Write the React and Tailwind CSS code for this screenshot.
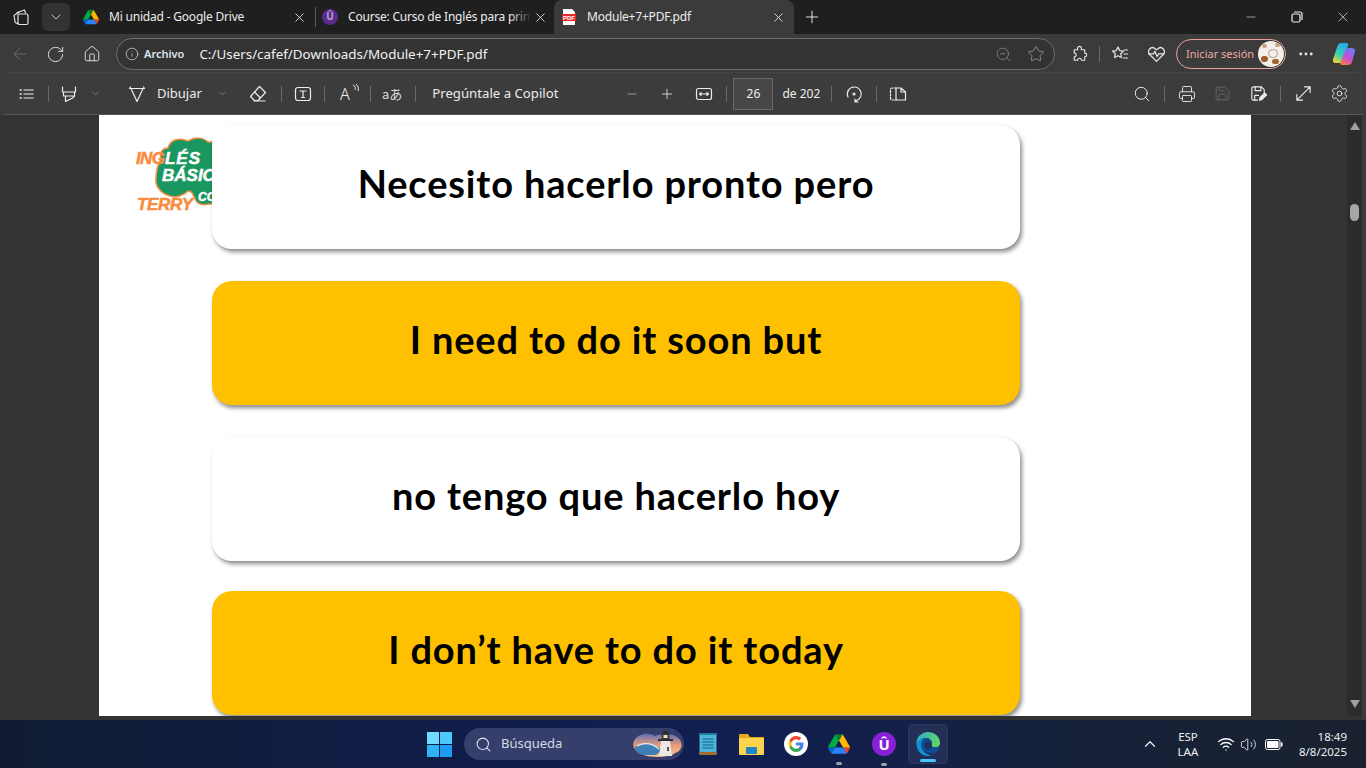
import React from 'react';
import { ArrowLeft, ChevronDown, ChevronUp, Ellipsis, Home, Info, Minus, Plus, Printer, RotateCw, Save, Search, Settings, Star, Volume2, Wifi, X, ZoomOut } from 'lucide-react';

const ui = { fontFamily: '"Noto Sans", "Open Sans", sans-serif' };

const Sep = ({ className = '' }) => <div className={`w-px h-[16px] bg-[#6a6a6a] shrink-0 ${className}`} />;

const Svg = ({ size = 20, children, className = '', vb = '0 0 20 20' }) => (
  <svg width={size} height={size} viewBox={vb} fill="none" stroke="currentColor" strokeWidth="1.2" strokeLinecap="round" strokeLinejoin="round" className={`shrink-0 ${className}`}>
    {children}
  </svg>
);

const DriveIcon = ({ size = 16 }) => (
  <svg width={size} height={size} viewBox="0 0 87.3 78" className="shrink-0">
    <path d="m6.6 66.85 3.85 6.65c.8 1.4 1.95 2.5 3.3 3.3l13.75-23.8h-27.5c0 1.55.4 3.1 1.2 4.5z" fill="#0066da" />
    <path d="m43.65 25-13.75-23.8c-1.35.8-2.5 1.9-3.3 3.3l-25.4 44a9.06 9.06 0 0 0 -1.2 4.5h27.5z" fill="#00ac47" />
    <path d="m73.55 76.8c1.35-.8 2.5-1.9 3.3-3.3l1.6-2.75 7.65-13.25c.8-1.4 1.2-2.95 1.2-4.5h-27.502l5.852 11.5z" fill="#ea4335" />
    <path d="m43.65 25 13.75-23.8c-1.35-.8-2.9-1.2-4.5-1.2h-18.5c-1.6 0-3.15.45-4.5 1.2z" fill="#00832d" />
    <path d="m59.8 53h-32.3l-13.75 23.8c1.35.8 2.9 1.2 4.5 1.2h50.8c1.6 0 3.15-.45 4.5-1.2z" fill="#2684fc" />
    <path d="m73.4 26.5-12.7-22c-.8-1.4-1.95-2.5-3.3-3.3l-13.75 23.8 16.15 28h27.45c0-1.55-.4-3.1-1.2-4.5z" fill="#ffba00" />
  </svg>
);

const UIcon = ({ size = 16, bg = '#5b2a8c', fg = '#b9a6cc' }) => (
  <div className="rounded-full flex items-center justify-center shrink-0 font-bold" style={{ width: size, height: size, background: bg, color: fg, fontSize: size * 0.62, lineHeight: 1 }}>
    Û
  </div>
);

const Tab = ({ icon, title, active, width, fade, iconBox, closeBox }) => (
  <div className={`relative flex items-center h-full shrink-0 ${width} ${active ? 'bg-[#3b3b3b] rounded-t-[8px]' : ''}`}>
    <div className={`flex items-center ${iconBox}`}>{icon}</div>
    <span className="text-[12px] tracking-[-0.2px] text-[#ececec] overflow-hidden whitespace-nowrap flex-1 min-w-0">{title}</span>
    {fade && <div className="absolute right-[22px] top-0 h-full w-[22px] bg-gradient-to-r from-transparent to-[#1f1f1f]" />}
    <X size={15} strokeWidth={1.4} className={`text-[#e8e8e8] ml-[4px] shrink-0 ${closeBox}`} />
  </div>
);

const TabBar = () => (
  <div className="h-[34px] bg-[#1f1f1f] flex items-end text-white shrink-0">
    <div className="w-[42px] h-full flex items-center justify-center">
      <Svg size={20} className="text-[#e4e4e4]">
        <path d="M6 5.500l7.500-2.500 1 3M3.500 8l5-3M3 8.500l1.200 7 3 1.500" />
        <rect x="7" y="7" width="10" height="10.500" rx="1.500" />
      </Svg>
    </div>
    <div className="w-[28px] h-[28px] mb-[3px] rounded-[6px] bg-[#333333] flex items-center justify-center">
      <ChevronDown size={16} strokeWidth={1.300} className="text-[#dddddd]" />
    </div>
    <div className="w-[2px]" />
    <div className="flex h-[34px] items-center">
      <Tab width="w-[243px]" iconBox="w-[37px] pl-[11px]" closeBox="mr-[8px]" title="Mi unidad - Google Drive" icon={<DriveIcon />} />
      <div className="w-px h-[20px] bg-[#5a5a5a]" />
      <Tab width="w-[238px]" iconBox="w-[32px] pl-[6px]" closeBox="mr-[6px]" fade title="Course: Curso de Inglés para principiantes" icon={<UIcon />} />
      <Tab
        width="w-[240px]"
        active
        iconBox="w-[33px] pl-[7px]"
        closeBox="mr-[8px]"
        title="Module+7+PDF.pdf"
        icon={
          <svg width="16" height="16" viewBox="0 0 16 16">
            <path d="M2 0h9l3 3v13H2z" fill="#fff" />
            <rect x="1" y="5" width="14" height="7" fill="#e5252a" />
            <text x="8" y="10.800" textAnchor="middle" fontSize="6" fontWeight="700" fill="#fff" fontFamily="Liberation Sans">PDF</text>
          </svg>
        }
      />
    </div>
    <div className="w-[36px] h-full flex items-center justify-center">
      <Plus size={20} strokeWidth={1.100} className="text-[#f2f2f2]" />
    </div>
    <div className="flex-1" />
    <div className="flex items-center h-full text-[#eeeeee]">
      <div className="w-[46px] flex justify-center"><Minus size={14} strokeWidth={1} /></div>
      <div className="w-[46px] flex justify-center">
        <Svg size={12} vb="0 0 12 12"><rect x="1" y="3" width="8" height="8" rx="1.500" /><path d="M3.500 1h5.500a2 2 0 0 1 2 2v5.500" /></Svg>
      </div>
      <div className="w-[46px] flex justify-center"><X size={16} strokeWidth={1} /></div>
    </div>
  </div>
);

const AddressBar = () => (
  <div className="h-[38px] pt-[2px] bg-[#3b3b3b] flex items-center text-[#e6e6e6] shrink-0">
    <div className="w-[40px] flex justify-center"><ArrowLeft size={20} strokeWidth={1} className="text-[#707070]" /></div>
    <div className="w-[31px] flex justify-center"><RotateCw size={19} strokeWidth={1.200} /></div>
    <div className="w-[42px] flex justify-center"><Home size={18} strokeWidth={1.200} /></div>
    <div className="ml-[3px] w-[939px] h-[32px] rounded-full border border-[#6c6c6c] bg-[#333333] flex items-center">
      <Info size={14} strokeWidth={1.200} className="ml-[8px] text-[#d8d8d8]" />
      <span className="ml-[5px] text-[11px] font-semibold text-[#dfe6ee]">Archivo</span>
      <span className="ml-[15px] text-[13.400px] text-[#f0f0f0]">C:/Users/cafef/Downloads/Module+7+PDF.pdf</span>
      <div className="flex-1" />
      <ZoomOut size={17} strokeWidth={1.100} className="text-[#8d8d8d]" />
      <Star size={18} strokeWidth={1.100} className="ml-[15px] mr-[9px] text-[#9a9a9a]" />
    </div>
    <Svg size={19} className="ml-[15px]">
      <path d="M8 3.500a2 2 0 0 1 4 0V5h3.500v3.500a2 2 0 0 1 0 4V16H12a2 2 0 0 0-4 0H4.500v-3.500a2 2 0 0 0 0-4V5H8z" />
    </Svg>
    <Sep className="ml-[10px] h-[16px]" />
    <Svg size={20} className="ml-[10px]">
      <path d="M8 3l1.700 3.600 3.800.5-2.800 2.600.7 3.800L8 11.700l-3.400 1.800.7-3.800L2.500 7.100l3.800-.5z" />
      <path d="M14 6h3.500M14 10h3.500M13 14h4.500" />
    </Svg>
    <Svg size={21} className="ml-[16px]">
      <path d="M10 16.500L3.500 10c-3-4 1.500-8 4.500-6l2 1.500L12 4c3-2 7.500 2 4.500 6z" />
      <path d="M2.500 9.500h4.500l1.500-2.500 2 5 1.500-2.500h5" />
    </Svg>
    <div className="ml-[9px] w-[110px] h-[30px] rounded-full border border-[#e8a29c] flex items-center shrink-0">
      <span className="ml-[9px] text-[11px] text-[#eeaaa4] whitespace-nowrap">Iniciar sesión</span>
      <div className="ml-auto mr-[1px] w-[26px] h-[26px] rounded-full bg-[#f3efe9] relative overflow-hidden">
        <div className="absolute left-[3px] top-[15px] w-[7px] h-[6px] rounded-full bg-[#9c5a2c]" />
        <div className="absolute left-[14px] top-[18px] w-[7px] h-[5px] rounded-full bg-[#a8642f]" />
        <div className="absolute left-[10px] top-[8px] w-[10px] h-[9px] rounded-full border border-[#b09a88]" />
        <div className="absolute left-[4px] top-[3px] w-[5px] h-[4px] rounded-full bg-[#c9a280]" />
        <div className="absolute left-[17px] top-[2px] w-[5px] h-[4px] rounded-full bg-[#c9a280]" />
      </div>
    </div>
    <Ellipsis size={18} strokeWidth={1.800} className="ml-[11px]" />
    <svg width="24" height="24" viewBox="0 0 24 24" className="ml-[17px] shrink-0">
      <defs>
        <linearGradient id="cpa" x1="0.700" y1="0" x2="0.200" y2="1"><stop offset="0" stopColor="#2aa8f0" /><stop offset="0.550" stopColor="#35d0b0" /><stop offset="1" stopColor="#f7d02b" /></linearGradient>
        <linearGradient id="cpb" x1="0.700" y1="0" x2="0.200" y2="1"><stop offset="0" stopColor="#6a7cf0" /><stop offset="0.550" stopColor="#c84fd8" /><stop offset="1" stopColor="#f5803c" /></linearGradient>
      </defs>
      <path d="M9.500 1h5c1.500 0 2 1 1.500 2.500L11 19c-.5 1.500-1.500 2-3 2H3.500C1.500 21 .5 19.500 1 17.500L5.500 4C6 2 7.500 1 9.500 1z" fill="url(#cpa)" />
      <path d="M17 6h3c2 0 3.500 1.500 3 3.500L20 20c-.5 2-2 3-4 3h-6c-1.500 0-2-1-1.500-2.500L13 9c.5-2 2-3 4-3z" fill="url(#cpb)" />
    </svg>
  </div>
);

const PdfToolbar = () => (
  <div className="h-[43px] bg-[#3b3b3b] shrink-0 pl-[3px] pr-[3px]">
    <div className="h-full rounded-t-[7px] bg-[#3c3c3c] border-t border-[#454545] border-b-[#565656] border-b flex items-center text-[#ececec] text-[13px] relative">
      <Svg size={18} className="ml-[15px]">
        <path d="M6.500 5.500H17M6.500 10H17M6.500 14.500H17" />
        <path d="M2.500 5.500h1M2.500 10h1M2.500 14.500h1" strokeWidth="1.800" />
      </Svg>
      <Sep className="ml-[12px]" />
      <Svg size={20} className="ml-[10px]">
        <path d="M3.500 3v5h13V3M4.500 8v4h11V8M4.500 12h11l-2 2-7 3.500V12" />
      </Svg>
      <ChevronDown size={11} strokeWidth={1.100} className="ml-[11px] text-[#b0b0b0]" />
      <Svg size={20} className="ml-[26px]">
        <path d="M2.500 4.500h15M4 4.500l6 13 6-13M2.500 4.500l1-1.500M17.500 4.500l-1-1.500" />
      </Svg>
      <span className="ml-[10px] text-[13px]">Dibujar</span>
      <ChevronDown size={11} strokeWidth={1.100} className="ml-[15px] text-[#b0b0b0]" />
      <Svg size={20} className="ml-[20px]">
        <path d="M11.500 2.500l6 6-7.500 8H6.500L2.500 12.500z" />
        <path d="M6.500 8l6 6M6 17h11" />
      </Svg>
      <Sep className="ml-[13px]" />
      <Svg size={20} className="ml-[11px]">
        <rect x="2.500" y="3.500" width="15" height="13" rx="2.500" />
        <path d="M7 7h6M10 7v6.500M8.500 13.500h3" />
      </Svg>
      <Sep className="ml-[11px]" />
      <div className="ml-[15px] w-[20px] relative h-[22px] text-[16px] leading-[22px] font-light">
        A
        <svg width="8" height="10" viewBox="0 0 8 10" fill="none" stroke="currentColor" strokeWidth="1" className="absolute right-0 top-[1px]">
          <path d="M1 1c2 1 3 3 2 5M4 0c2 2 3 4 2 7" />
        </svg>
      </div>
      <Sep className="ml-[10px]" />
      <span className="ml-[11px] text-[13px] text-[#dddddd]" style={{ fontFamily: '"Noto Sans CJK JP", sans-serif' }}>aあ</span>
      <Sep className="ml-[13px]" />
      <span className="ml-[16px] text-[13.200px]">Pregúntale a Copilot</span>
      <Minus size={14} strokeWidth={1.200} className="ml-[67px] text-[#b5b5b5]" />
      <Plus size={16} strokeWidth={1.200} className="ml-[20px]" />
      <Svg size={20} className="ml-[19px]">
        <rect x="2.500" y="4.500" width="15" height="11" rx="2" />
        <path d="M5.500 10h9M5.500 10l1.500-1.300v2.600zM14.500 10L13 8.700v2.600z" />
      </Svg>
      <Sep className="ml-[12px]" />
      <div className="ml-[6px] w-[40px] h-[32px] border border-[#6a6a6a] bg-[#474747] flex items-center justify-center text-[12px]">26</div>
      <span className="ml-[9px] text-[12px]">de 202</span>
      <Sep className="ml-[11px]" />
      <Svg size={20} className="ml-[12px]">
        <path d="M4 13A7 7 0 0 1 10 3a7 7 0 0 1 5 12l-3 2M11 15v3h3" />
        <circle cx="10" cy="10" r="1" />
      </Svg>
      <Sep className="ml-[12px]" />
      <Svg size={20} className="ml-[11px]">
        <path d="M8 4H4a1.500 1.500 0 0 0-1.500 1.500v9A1.500 1.500 0 0 0 4 16h4" strokeDasharray="2 1.500" />
        <path d="M8 4h5l4.500 4v8H8zM13 4v4h4.500" />
      </Svg>
      <div className="flex-1" />
      <Search size={18} strokeWidth={1.300} />
      <Sep className="ml-[13px]" />
      <Printer size={18} strokeWidth={1.200} className="ml-[13px]" />
      <Save size={17} strokeWidth={1.100} className="ml-[18px] text-[#6e6e6e]" />
      <Svg size={19} className="ml-[18px]">
        <path d="M9 17H4.500A1.500 1.500 0 0 1 3 15.500v-11A1.500 1.500 0 0 1 4.500 3H13l3 3v3" />
        <path d="M6.500 3v4h6V3M6 17v-5h4" />
        <path d="M11 17l.5-2.500 5-5 2 2-5 5z" fill="currentColor" />
      </Svg>
      <Sep className="ml-[12px]" />
      <Svg size={19} className="ml-[13px]">
        <path d="M3 17L17 3M11 3h6v6M3 11v6h6" />
      </Svg>
      <Settings size={19} strokeWidth={1.100} className="ml-[17px] mr-[14px]" />
    </div>
  </div>
);

const Logo = () => (
  <svg width="90" height="80" viewBox="0 0 90 80" className="absolute left-[36px] top-[21px]">
    <path
      d="M26 23c-2-7 2-11 7-11 2-8 11-11 20-7 6-4 15-4 20 1h17v62H74c-6 2-12 0-14-5-2-5-3-8-7-8-4 4-11 7-18 5-8-2-15-9-14-17 0-8 2-15 5-20z"
      fill="#1a9660"
      stroke="#f98c3e"
      strokeWidth="1.500"
    />
    <g fontFamily="Liberation Sans" fontWeight="700" fontStyle="italic" strokeWidth="0.500">
      <text x="1" y="28" fontSize="17" fill="#fb8b3c" stroke="#fb8b3c" textLength="29">ING</text>
      <text x="30" y="28" fontSize="17" fill="#fff" stroke="#fff" textLength="35">LÉS</text>
      <text x="27" y="45" fontSize="17" fill="#fff" stroke="#fff">BÁSICO</text>
      <text x="63" y="65" fontSize="12" fill="#fff" stroke="#fff">CO</text>
      <text x="2" y="74" fontSize="17" fill="#fb8b3c" stroke="#fb8b3c" textLength="56">TERRY</text>
    </g>
  </svg>
);

const Card = ({ text, yellow, className = '' }) => (
  <div
    className={`w-[808px] h-[124px] pb-[7px] rounded-[20px] flex items-center justify-center shadow-[2px_3px_4px_rgba(0,0,0,0.45)] text-black text-[38px] tracking-[0.85px] font-bold shrink-0 relative ${yellow ? 'bg-[#ffc000]' : 'bg-white'} ${className}`}
    style={{ fontFamily: 'Lato, sans-serif' }}
  >
    {text}
  </div>
);

const Viewer = () => (
  <div className="h-[605px] bg-[#333333] flex shrink-0 overflow-hidden">
    <div className="ml-[99px] w-[1152px] h-[601px] bg-white relative overflow-hidden">
      <Logo />
      <div className="flex flex-col gap-[32px] pl-[113px] pt-[10px]">
        <Card text="Necesito hacerlo pronto pero" />
        <Card text="I need to do it soon but" yellow />
        <Card text="no tengo que hacerlo hoy" />
        <Card text="I don’t have to do it today" yellow className="-mt-[2px]" />
      </div>
    </div>
    <div className="flex-1" />
    <div className="w-[15px] bg-[#2c2c2c] h-[601px] relative">
      <div className="absolute left-[3px] top-[7px] w-0 h-0 border-x-[5px] border-x-transparent border-b-[8px] border-b-[#a0a0a0]" />
      <div className="absolute left-[3px] top-[89px] w-[9px] h-[17px] rounded-full bg-[#a6a6a6]" />
      <div className="absolute left-[3px] bottom-[8px] w-0 h-0 border-x-[5px] border-x-transparent border-t-[8px] border-t-[#a0a0a0]" />
    </div>
    <div className="w-[4px] bg-[#3b3b3b]" />
  </div>
);

const Taskbar = () => (
  <div className="h-[48px] shrink-0 flex items-center text-white bg-[linear-gradient(90deg,#111c33_0%,#101d4a_35%,#111f52_55%,#16213a_78%,#1a2230_100%)]">
    <div className="ml-[427px] w-[25px] h-[25px] grid grid-cols-2 grid-rows-2 gap-[1px]">
      <div className="bg-[#6fdcff]" />
      <div className="bg-[#4cc8fb]" />
      <div className="bg-[#2db4f5]" />
      <div className="bg-[#1e9df0]" />
    </div>
    <div className="ml-[12px] w-[220px] h-[32px] rounded-full bg-[#363f6b] flex items-center relative">
      <Search size={17} strokeWidth={1.500} className="ml-[11px] text-[#dfe3ee]" />
      <span className="ml-[9px] text-[13px] text-[#d5d8e6]">Búsqueda</span>
      <svg width="52" height="28" viewBox="0 0 52 28" className="absolute right-[0px] top-[2px]">
        <defs>
          <linearGradient id="sky" x1="0" y1="0" x2="0" y2="1"><stop offset="0" stopColor="#5f6fb8" /><stop offset="0.500" stopColor="#e89a78" /><stop offset="1" stopColor="#f5c69a" /></linearGradient>
        </defs>
        <path d="M3 9c6-7 15-6 20-3 8-3 20-3 25 4 4 6 0 12-5 13-5 5-28 5-33 1C2 21-1 15 3 9z" fill="url(#sky)" />
        <path d="M3 17c10-6 20-4 27 3l-6 5H11C6 24 3 21 3 17z" fill="#3f7fb8" />
        <path d="M5 16c8-4 16-2 22 3" stroke="#e6eef6" strokeWidth="1.200" fill="none" />
        <path d="M29 11h9l2 15H27z" fill="#ece8e2" />
        <rect x="35" y="17" width="2" height="4" fill="#55505a" />
        <rect x="26" y="9" width="15" height="2" fill="#2a2c3a" />
        <rect x="29.500" y="4" width="8" height="5" fill="#3a3a48" />
        <rect x="31.500" y="5" width="4" height="3" fill="#f7e2a0" />
        <path d="M33.500 0l-4.500 4h9z" fill="#2a2c3a" />
      </svg>
    </div>
    <svg width="18" height="24" viewBox="0 0 18 24" className="ml-[15px] shrink-0">
      <rect x="0.500" y="1" width="17" height="22" rx="1" fill="#4fb4d8" />
      <rect x="0.500" y="20" width="17" height="3" fill="#a86a2c" />
      <path d="M0 1h18v2H0z" fill="#1d7fa8" />
      <path d="M3.500 7h11M3.500 10h11M3.500 13h11M3.500 16h11" stroke="#0f5e85" strokeWidth="1" />
    </svg>
    <svg width="25" height="22" viewBox="0 0 25 22" className="ml-[22px] shrink-0">
      <path d="M0 2a1 1 0 0 1 1-1h8l2 3h13a1 1 0 0 1 1 1v4H0z" fill="#e8a71c" />
      <path d="M0 5h25v16a1 1 0 0 1-1 1H1a1 1 0 0 1-1-1z" fill="#fcd34d" />
      <rect x="7" y="14" width="11" height="7" rx="1" fill="#1f86c7" />
    </svg>
    <svg width="24" height="24" viewBox="0 0 24 24" className="ml-[20px] shrink-0">
      <circle cx="12" cy="12" r="12" fill="#fff" />
      <path d="M19.500 12.200c0-.6-.05-1.100-.15-1.600H12v3h4.200c-.2 1-.75 1.800-1.600 2.400v2h2.600c1.500-1.400 2.300-3.400 2.300-5.800z" fill="#4285f4" />
      <path d="M12 20c2.200 0 4-.7 5.200-2l-2.600-2c-.7.500-1.600.8-2.600.8-2 0-3.800-1.400-4.400-3.200H5.500v2.100C6.800 18.300 9.200 20 12 20z" fill="#34a853" />
      <path d="M7.600 13.600c-.3-1-.3-2.200 0-3.200V8.300H5.500c-.9 1.800-.9 5.600 0 7.400z" fill="#fbbc05" />
      <path d="M12 7.200c1.200 0 2.200.4 3 1.200l2.300-2.300C15.900 4.800 14.100 4 12 4 9.200 4 6.800 5.700 5.500 8.300l2.100 2.100C8.200 8.600 10 7.200 12 7.200z" fill="#ea4335" />
    </svg>
    <div className="ml-[19px] w-[24px] relative flex justify-center"><DriveIcon size={22} />
      <div className="absolute -bottom-[10px] w-[6px] h-[3px] rounded-full bg-[#9aa0ae]" />
    </div>
    <div className="ml-[21px] w-[24px] relative flex justify-center"><UIcon size={24} bg="#8a1fd8" fg="#ffffff" />
      <div className="absolute -bottom-[10px] w-[6px] h-[3px] rounded-full bg-[#9aa0ae]" />
    </div>
    <div className="ml-[12px] w-[40px] h-[40px] rounded-[4px] bg-[#232f57] border border-[#2c3860] relative flex items-center justify-center">
      <svg width="24" height="24" viewBox="0 0 24 24">
        <defs>
          <linearGradient id="edg" x1="0" y1="0" x2="1" y2="0.300"><stop offset="0" stopColor="#2aa8d8" /><stop offset="1" stopColor="#5fd66a" /></linearGradient>
        </defs>
        <path d="M12 0c7 0 12 5 12 11 0 4-4 5-7 4-2-.7-1-2-1-3.500C16 8 13 6 9.500 6 5 6 1.500 9 .5 13-.5 6 5 0 12 0z" fill="url(#edg)" />
        <path d="M.5 13C1.500 9 5 6 9.500 6c-3 1-4.500 4-4 8 .5 5 5 9 10.500 9.300C14.800 23.800 13.500 24 12 24 5.500 24 1 19 .5 13z" fill="#0f8fd8" />
        <path d="M9.500 6C13 6 16 8 16 11.500c0 1.500-1 2.800 1 3.500 3 1 7 0 7-2-1 6-5 9-8 8.300-5.500-.3-10-3.300-10.500-7.300C5 10 6.500 7 9.500 6z" fill="#0c4f96" />
        <ellipse cx="12" cy="13.500" rx="3.500" ry="4" fill="#232f57" />
      </svg>
      <div className="absolute bottom-[1px] w-[16px] h-[3px] rounded-full bg-[#4cc2ff]" />
    </div>
    <div className="flex-1" />
    <ChevronUp size={18} strokeWidth={1.600} className="text-[#eeeeee]" />
    <div className="ml-[16px] w-[26px] flex flex-col items-center text-[11.500px] leading-[15px] text-[#eeeeee]">
      <span>ESP</span>
      <span>LAA</span>
    </div>
    <Wifi size={18} strokeWidth={1.700} className="ml-[16px]" />
    <Volume2 size={17} strokeWidth={1.100} className="ml-[5px]" />
    <svg width="18" height="11" viewBox="0 0 18 11" className="ml-[8px] shrink-0">
      <rect x="0.500" y="0.500" width="14.500" height="10" rx="2" fill="none" stroke="#fff" />
      <rect x="2" y="2" width="11.500" height="7" rx="1" fill="#fff" />
      <rect x="16" y="3.500" width="1.500" height="4" fill="#fff" />
    </svg>
    <div className="ml-[16px] mr-[19px] flex flex-col items-end text-[11.500px] leading-[15px] text-[#eeeeee]">
      <span>18:49</span>
      <span>8/8/2025</span>
    </div>
  </div>
);

export default function App() {
  return (
    <div className="w-[1366px] h-[768px] overflow-hidden flex flex-col bg-[#333333]" style={ui}>
      <TabBar />
      <AddressBar />
      <PdfToolbar />
      <Viewer />
      <Taskbar />
    </div>
  );
}
